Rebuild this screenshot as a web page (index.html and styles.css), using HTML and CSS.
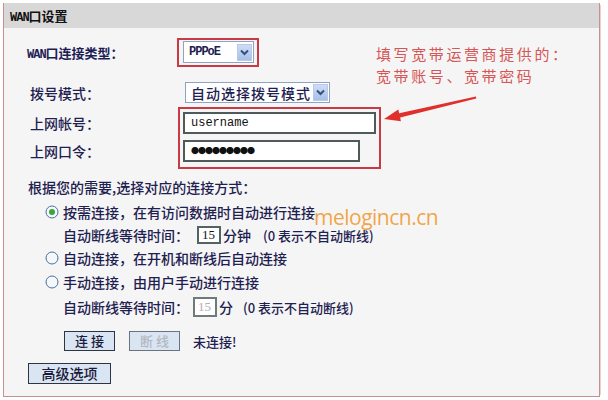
FILE: index.html
```html
<!DOCTYPE html>
<html lang="zh-CN">
<head>
    <meta charset="UTF-8">
    <title>WAN口设置</title>
    <link rel="stylesheet" href="styles.css">
</head>
<body>
    <div class="frame">
        <div class="title"><span class="latin">WAN</span>口设置</div>

        <div class="panel">
            <!-- connection type -->
            <div class="row row-type">
                <span class="label label-type"><span class="latin">WAN</span>口连接类型：</span>
                <div class="mark mark-type">
                    <div class="select select-type">
                        <span class="select-text mono">PPPoE</span>
                        <span class="drop"><svg width="9" height="7" viewBox="0 0 9 7"><path d="M1 1.5 L4.5 5 L8 1.5" fill="none" stroke="#34507e" stroke-width="2"/></svg></span>
                    </div>
                </div>
            </div>

            <div class="row row-dial">
                <span class="label label-dial">拨号模式：</span>
                <div class="select select-dial">
                    <span class="select-text">自动选择拨号模式</span>
                    <span class="drop"><svg width="9" height="7" viewBox="0 0 9 7"><path d="M1 1.5 L4.5 5 L8 1.5" fill="none" stroke="#34507e" stroke-width="2"/></svg></span>
                </div>
            </div>

            <!-- account / password -->
            <div class="row row-account">
                <div class="label-col">
                    <span class="label">上网帐号：</span>
                    <span class="label">上网口令：</span>
                </div>
                <div class="mark mark-account">
                    <div class="field field-user mono">username</div>
                    <div class="field field-pass">●●●●●●●●●</div>
                </div>
            </div>

            <p class="hint">根据您的需要,选择对应的连接方式：</p>

            <div class="option">
                <svg class="radio" width="14" height="14" viewBox="0 0 14 14"><circle cx="7" cy="7" r="6" fill="#f4f7fb" stroke="#4a7298"/><circle cx="7" cy="7" r="3" fill="#3da43d"/></svg>
                <span>按需连接，在有访问数据时自动进行连接</span>
            </div>
            <div class="sub">
                <span>自动断线等待时间：</span>
                <span class="num num-on">15</span>
                <span class="unit">分钟</span>
                <span class="note">(0 表示不自动断线)</span>
            </div>
            <div class="option option-second">
                <svg class="radio" width="14" height="14" viewBox="0 0 14 14"><circle cx="7" cy="7" r="6" fill="#f4f7fb" stroke="#4a7298"/></svg>
                <span>自动连接，在开机和断线后自动连接</span>
            </div>
            <div class="option option-third">
                <svg class="radio" width="14" height="14" viewBox="0 0 14 14"><circle cx="7" cy="7" r="6" fill="#f4f7fb" stroke="#4a7298"/></svg>
                <span>手动连接，由用户手动进行连接</span>
            </div>
            <div class="sub sub-second">
                <span>自动断线等待时间：</span>
                <span class="num num-off">15</span>
                <span class="unit">分</span>
                <span class="note">(0 表示不自动断线)</span>
            </div>

            <div class="actions">
                <span class="btn">连 接</span>
                <span class="btn btn-off">断 线</span>
                <span class="status">未连接!</span>
            </div>

            <div class="advanced">
                <span class="btn btn-wide">高级选项</span>
            </div>
        </div>

        <!-- annotations drawn over the form -->
        <div class="callout">
            <div>填写宽带运营商提供的：</div>
            <div>宽带账号、宽带密码</div>
        </div>
        <svg class="arrow" width="96" height="28" viewBox="382 95 96 28">
            <polygon points="384,119 398.3,109.6 399.2,113.2 475.9,96.6 476.3,98.4 400.2,117.6 400.9,121.2" fill="#e0302c"/>
        </svg>
        <div class="watermark">melogincn.cn</div>
    </div>
</body>
</html>
```

FILE: styles.css
```css
/* General */
body {
    margin: 0;
    background-color: #ffffff;
    font-family: "Noto Sans CJK SC", "DejaVu Sans", sans-serif;
    font-size: 14px;
    font-weight: 500;
    color: #1e2150;
}

.latin {
    font-family: "Liberation Mono", monospace;
    font-weight: bold;
    font-size: 12px;
    letter-spacing: -1px;
}

.mono {
    font-family: "Liberation Mono", monospace;
}

/* Frame */
.frame {
    position: relative;
    margin: 3px 8px 0 3px;
    background-color: #f5f5f5;
    border-left: 1px solid #c98e8e;
    border-right: 1px solid #c98e8e;
    border-bottom: 1px solid #c98e8e;
    box-shadow: 3px 0 0 -2px #e6d2d2;
}

.title {
    height: 25px;
    line-height: 25px;
    padding-left: 6px;
    background-color: #d8d8d8;
    color: #111;
    font-size: 13px;
    font-weight: bold;
}

.panel {
    padding: 10px 0 12px 0;
}

/* Form rows */
.row {
    display: flex;
    align-items: center;
}

.label {
    flex: none;
}

.row-type {
    height: 29px;
    padding-left: 23px;
}

.label-type {
    width: 150px;
    font-size: 13px;
    font-weight: bold;
    color: #1d1d55;
}

.row-dial {
    height: 21px;
    margin-top: 15px;
    padding-left: 26px;
}

.label-dial {
    width: 155px;
}

.row-account {
    align-items: flex-start;
    height: 62px;
    margin-top: 4px;
    padding-left: 26px;
}

.label-col {
    width: 148px;
    display: flex;
    flex-direction: column;
    gap: 6px;
    padding-top: 5px;
}

.label-col .label {
    height: 22px;
    line-height: 22px;
}

/* Red highlight boxes */
.mark {
    border: 2px solid #c93a44;
    box-sizing: border-box;
}

.mark-type {
    width: 82px;
    height: 29px;
    padding: 1px 0 0 4px;
}

.mark-account {
    width: 203px;
    height: 62px;
    padding: 3px 0 0 3px;
    display: flex;
    flex-direction: column;
    gap: 6px;
}

/* Select boxes */
.select {
    display: flex;
    align-items: center;
    justify-content: space-between;
    box-sizing: border-box;
    height: 22px;
    background-color: #ffffff;
    border: 1px solid #8ea4c0;
    padding: 0 1px 0 5px;
}

.select-type {
    width: 71px;
}

.select-type .select-text {
    font-weight: bold;
    font-size: 12px;
    letter-spacing: -1px;
}

.select-dial {
    width: 145px;
    height: 21px;
}

.select-dial .select-text {
    letter-spacing: 1px;
}

.drop {
    display: flex;
    align-items: center;
    justify-content: center;
    width: 15px;
    height: 17px;
    background: linear-gradient(#cfdcf6, #a8bfe9);
    border: 1px solid #b9c9ea;
    box-sizing: border-box;
}

/* Text fields */
.field {
    box-sizing: border-box;
    height: 22px;
    line-height: 18px;
    padding-left: 6px;
    background-color: #ffffff;
    border: 2px solid #4f5b5b;
    font-size: 12px;
    font-weight: normal;
    color: #111;
}

.field-user {
    width: 193px;
}

.field-pass {
    width: 177px;
    font-size: 8px;
    letter-spacing: -1px;
    line-height: 18px;
}

/* Connection mode */
.hint {
    margin: 8px 0 0 0;
    height: 20px;
    line-height: 20px;
    padding-left: 24px;
}

.option {
    display: flex;
    align-items: center;
    gap: 4px;
    height: 20px;
    margin-top: 5px;
    padding-left: 41px;
}

.option-second {
    margin-top: 2px;
}

.option-third {
    margin-top: 4px;
}

.sub {
    display: flex;
    align-items: center;
    height: 22px;
    margin-top: 2px;
    padding-left: 59px;
}

.sub-second {
    margin-top: 4px;
}

.num {
    box-sizing: border-box;
    width: 24px;
    height: 18px;
    line-height: 14px;
    margin-left: 8px;
    padding-left: 3px;
    background-color: #ffffff;
    border: 2px solid #556262;
    font-family: "Liberation Serif", serif;
    font-size: 13px;
    font-weight: normal;
    color: #111;
}

.num-off {
    margin-left: 4px;
    height: 20px;
    line-height: 16px;
    border-color: #6f7b7b;
    color: #b0b0b0;
}

.unit {
    margin-left: 2px;
}

.sub .note {
    margin-left: 12px;
    font-size: 13px;
}

.sub-second .note {
    margin-left: 10px;
}

/* Buttons */
.actions {
    display: flex;
    align-items: center;
    height: 20px;
    margin-top: 13px;
    padding-left: 60px;
}

.btn {
    display: inline-block;
    box-sizing: border-box;
    width: 51px;
    height: 20px;
    line-height: 18px;
    text-align: center;
    background-color: #dae5f4;
    border: 1px solid #2e3440;
    font-size: 13px;
    color: #1a1a3a;
}

.btn-off {
    margin-left: 14px;
    color: #b3b8c0;
    border-color: #6c7380;
}

.status {
    margin-left: 13px;
    font-size: 13px;
}

.advanced {
    height: 21px;
    margin-top: 12px;
    padding-left: 24px;
}

.btn-wide {
    width: 83px;
    height: 21px;
    line-height: 19px;
    font-size: 14px;
}

/* Annotations */
.callout {
    position: absolute;
    left: 372px;
    top: 40px;
    font-size: 15px;
    font-weight: normal;
    line-height: 22px;
    letter-spacing: 2.6px;
    color: #d65656;
}

.arrow {
    position: absolute;
    left: 378px;
    top: 92px;
    pointer-events: none;
}

.watermark {
    position: absolute;
    left: 310px;
    top: 201px;
    font-family: "Open Sans", sans-serif;
    font-size: 21px;
    font-weight: normal;
    line-height: 26px;
    color: rgba(240, 150, 40, 0.85);
    letter-spacing: -0.5px;
}
```
